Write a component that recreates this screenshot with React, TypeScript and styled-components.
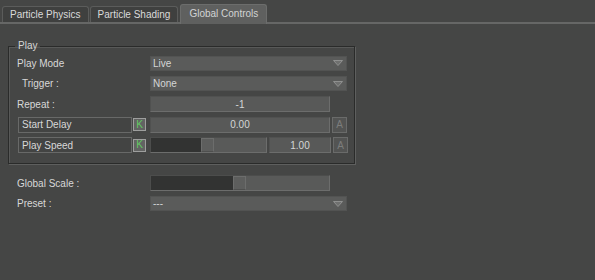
import React from "react";
import styled, { createGlobalStyle } from "styled-components";

const GlobalStyle = createGlobalStyle`
  html, body {
    margin: 0;
    padding: 0;
    background: #454645;
  }
  body {
    font-family: "Liberation Sans", Arial, sans-serif;
    font-size: 10px;
    color: #d6d6d6;
  }
`;

const Page = styled.div`
  width: 595px;
  height: 280px;
  background: #454645;
  overflow: hidden;
`;

const TabBar = styled.div`
  display: flex;
  align-items: flex-end;
  gap: 1px;
  height: 22px;
  padding-left: 2px;
  border-bottom: 2px solid #666766;
`;

const Tab = styled.div<{ $active?: boolean }>`
  display: flex;
  align-items: center;
  box-sizing: border-box;
  padding: 0 ${(p) => (p.$active ? "8px" : "7px")};
  height: ${(p) => (p.$active ? "20px" : "16px")};
  margin-bottom: ${(p) => (p.$active ? "-2px" : "0")};
  margin-left: ${(p) => (p.$active ? "1px" : "0")};
  padding-bottom: ${(p) => (p.$active ? "2px" : "0")};
  background: ${(p) => (p.$active ? "#5f605f" : "#3f403f")};
  border: 1px solid ${(p) => (p.$active ? "#6c6d6c" : "#5b5c5b")};
  border-bottom: none;
  border-radius: 3px 3px 0 0;
  color: ${(p) => (p.$active ? "#d2d4d4" : "#dadada")};
  white-space: nowrap;
`;

const Body = styled.div`
  padding: 17px 0 0 8px;
`;

const Group = styled.fieldset`
  width: 347px;
  box-sizing: border-box;
  margin: 0;
  padding: 4px 0 10px 0;
  border: 1px solid #2a2b2a;
  box-shadow: 1px 1px 0 #5e5f5e, inset 1px 1px 0 #585958;
`;

const Legend = styled.legend`
  margin-left: 6px;
  padding: 0 3px;
  color: #d6d6d6;
  line-height: 10px;
`;

const Rows = styled.div<{ $pad?: number }>`
  display: flex;
  flex-direction: column;
  gap: 4.5px;
  padding-left: ${(p) => p.$pad ?? 8}px;
`;

const Row = styled.div`
  display: grid;
  grid-template-columns: 133px auto;
  align-items: center;
  height: 16px;
`;

const Label = styled.span<{ $indent?: number }>`
  padding-left: ${(p) => p.$indent ?? 0}px;
  color: #d8d8d8;
  white-space: nowrap;
`;

const KeyLabel = styled.div`
  display: flex;
  align-items: center;
  gap: 1px;
`;

const LabelBox = styled.div`
  width: 114px;
  height: 16px;
  box-sizing: border-box;
  margin-left: 1px;
  padding-left: 3px;
  display: flex;
  align-items: center;
  border: 1px solid #686968;
  background: #434443;
  color: #d8d8d8;
`;

const KeyButton = styled.div`
  width: 13px;
  height: 13px;
  box-sizing: border-box;
  display: flex;
  align-items: center;
  justify-content: center;
  border: 1px solid #9e9f9e;
  background: #626362;
  color: #62c862;
  font-family: "Liberation Sans", Arial, sans-serif;
  font-size: 10px;
  line-height: 10px;
`;

const Controls = styled.div`
  display: flex;
  align-items: center;
  gap: 2px;
  height: 16px;
`;

const Dropdown = styled.div`
  width: 197px;
  height: 15px;
  box-sizing: border-box;
  display: flex;
  align-items: center;
  justify-content: space-between;
  padding: 0 2px 0 2px;
  background: #5a5b5a;
  border: 1px solid #525352;
  color: #d4d6d6;
`;

const Arrow = styled.svg`
  width: 10px;
  height: 6px;
  margin-right: 1px;
`;

const Field = styled.div<{ $width?: number }>`
  width: ${(p) => p.$width ?? 180}px;
  height: 16px;
  box-sizing: border-box;
  display: flex;
  align-items: center;
  justify-content: center;
  background: #585958;
  border: 1px solid;
  border-color: #505150 #6c6d6c #6c6d6c #505150;
  color: #d4d6d6;
`;

const AnimButton = styled.div`
  width: 15px;
  height: 16px;
  box-sizing: border-box;
  display: flex;
  align-items: center;
  justify-content: center;
  border: 1px solid #6a6b6a;
  background: #535453;
  color: #7c7d7c;
  font-size: 10px;
`;

const SliderTrack = styled.div<{ $width: number }>`
  width: ${(p) => p.$width}px;
  height: 16px;
  box-sizing: border-box;
  display: flex;
  background: #595a59;
  border: 1px solid;
  border-color: #4c4d4c #6c6d6c #6c6d6c #4c4d4c;
`;

const SliderFill = styled.div`
  background: #323332;
  height: 100%;
`;

const SliderHandle = styled.div`
  width: 13px;
  height: 100%;
  box-sizing: border-box;
  background: #5d5e5d;
  border: 1px solid #6c6d6c;
  border-bottom-color: #4e4f4e;
`;

const Outside = styled.div`
  margin-top: 11px;
`;

function DropArrow() {
  return (
    <Arrow viewBox="0 0 10 6">
      <polygon points="0.5,0.5 9.5,0.5 5,5.5" fill="#6f706f" stroke="#8f908f" strokeWidth="1" />
    </Arrow>
  );
}

function Select({ value }: { value: string }) {
  return (
    <Dropdown>
      <span>{value}</span>
      <DropArrow />
    </Dropdown>
  );
}

function Slider({ width, fill }: { width: number; fill: number }) {
  return (
    <SliderTrack $width={width}>
      <SliderFill style={{ width: fill }} />
      <SliderHandle />
    </SliderTrack>
  );
}

export default function App() {
  return (
    <Page>
      <GlobalStyle />
      <TabBar>
        <Tab>Particle Physics</Tab>
        <Tab>Particle Shading</Tab>
        <Tab $active>Global Controls</Tab>
      </TabBar>
      <Body>
        <Group>
          <Legend>Play</Legend>
          <Rows>
            <Row>
              <Label>Play Mode</Label>
              <Controls>
                <Select value="Live" />
              </Controls>
            </Row>
            <Row>
              <Label $indent={5}>Trigger :</Label>
              <Controls>
                <Select value="None" />
              </Controls>
            </Row>
            <Row>
              <Label>Repeat :</Label>
              <Controls>
                <Field>-1</Field>
              </Controls>
            </Row>
            <Row>
              <KeyLabel>
                <LabelBox>Start Delay</LabelBox>
                <KeyButton>K</KeyButton>
              </KeyLabel>
              <Controls>
                <Field>0.00</Field>
                <AnimButton>A</AnimButton>
              </Controls>
            </Row>
            <Row>
              <KeyLabel>
                <LabelBox>Play Speed</LabelBox>
                <KeyButton>K</KeyButton>
              </KeyLabel>
              <Controls>
                <Slider width={117} fill={50} />
                <Field $width={62}>1.00</Field>
                <AnimButton>A</AnimButton>
              </Controls>
            </Row>
          </Rows>
        </Group>
        <Outside>
          <Rows $pad={9}>
            <Row>
              <Label>Global Scale :</Label>
              <Controls>
                <Slider width={180} fill={82} />
              </Controls>
            </Row>
            <Row>
              <Label>Preset :</Label>
              <Controls>
                <Select value="---" />
              </Controls>
            </Row>
          </Rows>
        </Outside>
      </Body>
    </Page>
  );
}
